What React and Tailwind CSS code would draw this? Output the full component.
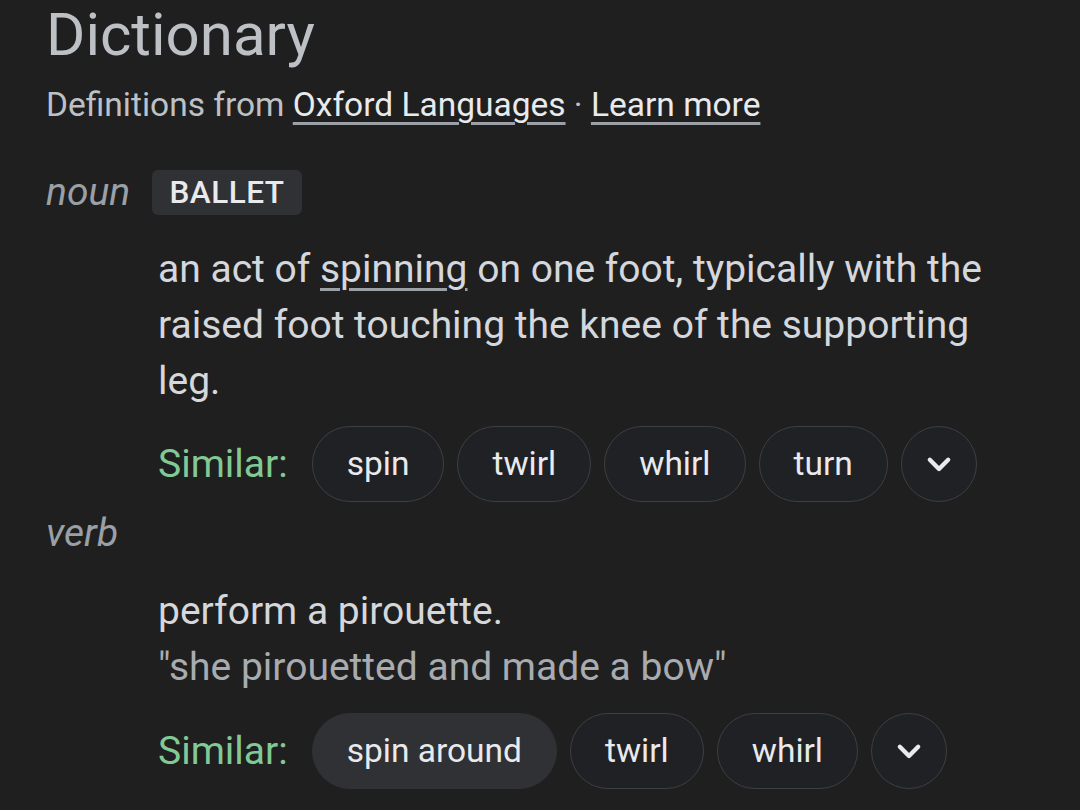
import React from "react";

const Chevron = () => (
  <svg width="40" height="40" viewBox="0 0 24 24" fill="none">
    <path
      d="M6.5 9.5l5.5 5.5 5.5-5.5"
      stroke="#e8eaed"
      strokeWidth="2.6"
      strokeLinecap="round"
      strokeLinejoin="round"
    />
  </svg>
);

const Chip = ({ label, filled }) => (
  <div
    className={
      filled
        ? "h-[76px] px-[34px] rounded-full bg-[#303134] border-[1.5px] border-[#303134] flex items-center text-[33.5px] text-[#e8eaed]"
        : "h-[76px] px-[34px] rounded-full bg-[#202124] border-[1.5px] border-[#3c4043] flex items-center text-[33.5px] text-[#e8eaed]"
    }
  >
    {label}
  </div>
);

const SimilarRow = ({ words, first }) => (
  <div className="flex items-center">
    <span className="text-[#81c995] text-[39px] mr-[24px]">Similar:</span>
    <div className="flex items-center gap-[13px]">
      {words.map((w, i) => (
        <Chip key={w} label={w} filled={first && i === 0} />
      ))}
      <div className="w-[76px] h-[76px] rounded-full bg-[#202124] border-[1.5px] border-[#3c4043] flex items-center justify-center">
        <Chevron />
      </div>
    </div>
  </div>
);

export default function App() {
  return (
    <div
      className="w-[1080px] h-[810px] overflow-hidden bg-[#1f1f1f] pl-[46px]"
      style={{ fontFamily: "Roboto, 'Noto Sans', sans-serif" }}
    >
      <h1 className="text-[60px] leading-[70px] text-[#bdc1c6]">Dictionary</h1>
      <div className="text-[33.5px] leading-[40px] text-[#bdc1c6] mt-[15px]">
        Definitions from{" "}
        <a className="text-[#e8eaed] underline decoration-[#9aa0a6] decoration-[3px] underline-offset-[6px]">
          Oxford Languages
        </a>{" "}
        ·{" "}
        <a className="text-[#e8eaed] underline decoration-[#9aa0a6] decoration-[3px] underline-offset-[6px]">
          Learn more
        </a>
      </div>

      <div className="flex items-center mt-[45px] h-[45px]">
        <span className="italic text-[39px] text-[#9aa0a6] w-[106px]">noun</span>
        <span className="bg-[#303134] text-[#e8eaed] font-medium text-[31.5px] rounded-[6px] h-[45px] w-[150px] flex items-center justify-center tracking-[0.5px]">
          BALLET
        </span>
      </div>

      <div className="pl-[112px] mt-[26px]">
        <p className="text-[39px] leading-[56px] text-[#d4d7db] w-[860px]">
          an act of{" "}
          <span className="underline decoration-[#9aa0a6] decoration-[3px] underline-offset-[6px]">
            spinning
          </span>{" "}
          on one foot, typically with the raised foot touching the knee of the
          supporting leg.
        </p>
        <div className="mt-[17px]">
          <SimilarRow words={["spin", "twirl", "whirl", "turn"]} />
        </div>
      </div>

      <div className="italic text-[39px] text-[#9aa0a6] mt-[3px] leading-[56px]">
        verb
      </div>

      <div className="pl-[112px] mt-[22px]">
        <p className="text-[39px] leading-[56px] text-[#d4d7db]">
          perform a pirouette.
        </p>
        <p className="text-[39px] leading-[56px] text-[#a8acb1]">
          "she pirouetted and made a bow"
        </p>
        <div className="mt-[18px]">
          <SimilarRow words={["spin around", "twirl", "whirl"]} first />
        </div>
      </div>
    </div>
  );
}
